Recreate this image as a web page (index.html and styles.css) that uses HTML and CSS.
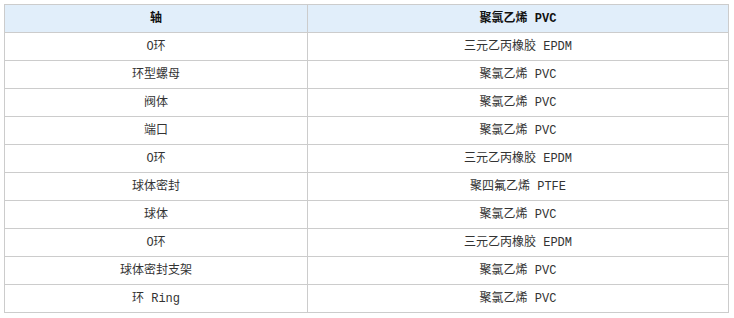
FILE: index.html
```html
<!DOCTYPE html>
<html lang="zh">
<head>
<meta charset="utf-8">
<link rel="stylesheet" href="styles.css">
</head>
<body>
<table class="spec">
  <thead>
    <tr><th class="c1">轴</th><th class="c2">聚氯乙烯 PVC</th></tr>
  </thead>
  <tbody>
    <tr><td>O环</td><td>三元乙丙橡胶 EPDM</td></tr>
    <tr><td>环型螺母</td><td>聚氯乙烯 PVC</td></tr>
    <tr><td>阀体</td><td>聚氯乙烯 PVC</td></tr>
    <tr><td>端口</td><td>聚氯乙烯 PVC</td></tr>
    <tr><td>O环</td><td>三元乙丙橡胶 EPDM</td></tr>
    <tr><td>球体密封</td><td>聚四氟乙烯 PTFE</td></tr>
    <tr><td>球体</td><td>聚氯乙烯 PVC</td></tr>
    <tr><td>O环</td><td>三元乙丙橡胶 EPDM</td></tr>
    <tr><td>球体密封支架</td><td>聚氯乙烯 PVC</td></tr>
    <tr><td>环 Ring</td><td>聚氯乙烯 PVC</td></tr>
  </tbody>
</table>
</body>
</html>
```
FILE: styles.css
```css
html, body {
  margin: 0;
  padding: 0;
  background: #fff;
}
body {
  padding: 4px;
  font-family: "Liberation Mono", "Noto Sans CJK SC", monospace;
  font-size: 12px;
  color: #333;
}
.spec {
  border-collapse: collapse;
  width: 725px;
  table-layout: fixed;
}
.spec th, .spec td {
  border: 1px solid #cccccc;
  height: 27px;
  padding: 0;
  text-align: center;
  vertical-align: middle;
  line-height: 16px;
}
.spec th {
  background: #e1eefa;
  color: #111;
  font-weight: bold;
}
.spec .c1 {
  width: 302px;
}
```
